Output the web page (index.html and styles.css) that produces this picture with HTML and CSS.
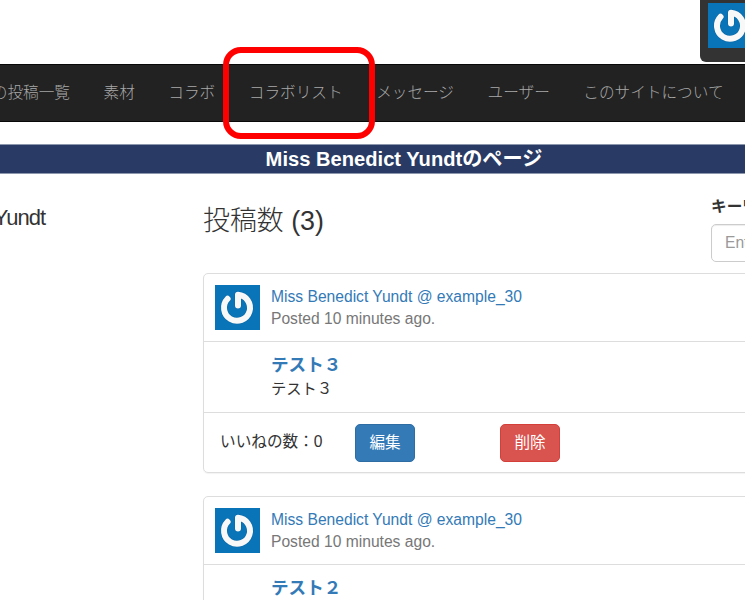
FILE: index.html
```html
<!DOCTYPE html>
<html lang="ja">
<head>
<meta charset="utf-8">
<title>Miss Benedict Yundtのページ</title>
<link rel="stylesheet" href="styles.css">
</head>
<body>
<svg width="0" height="0" class="defs">
  <defs>
    <symbol id="power" viewBox="0 0 45 45">
      <rect width="45" height="45" fill="#0a74b8"/>
      <g fill="none" stroke-linecap="round" stroke-linejoin="round">
        <path d="M12.6 13.8A13 13 0 1 0 23 9.8V20.5" stroke="#07548a" stroke-opacity=".35" stroke-width="7"/>
        <path d="M12.6 13.8A13 13 0 1 0 23 9.8V20.5" stroke="#f8f8f8" stroke-width="6"/>
      </g>
    </symbol>
  </defs>
</svg>
<header class="top"><div class="account"><svg class="avatar"><use href="#power"/></svg></div></header>
<nav class="nav">
  <a>の投稿一覧</a><a>素材</a><a>コラボ</a><a class="marked">コラボリスト</a><a>メッセージ</a><a>ユーザー</a><a>このサイトについて</a>
</nav>
<h1 class="banner">Miss Benedict Yundtのページ</h1>
<div class="columns">
  <aside class="profile"><span>Yundt</span></aside>
  <main>
    <div class="heading">
      <h2>投稿数 (3)</h2>
      <form class="search"><label>キーワード</label><div class="field">Enter</div></form>
    </div>
    <article class="card">
      <div class="author"><svg class="avatar"><use href="#power"/></svg><div><a class="name">Miss Benedict Yundt @ example_30</a><p class="time">Posted 10 minutes ago.</p></div></div>
      <div class="post"><h3>テスト３</h3><p>テスト３</p></div>
      <div class="actions"><span class="likes">いいねの数：0</span><a class="btn edit">編集</a><a class="btn delete">削除</a></div>
    </article>
    <article class="card">
      <div class="author"><svg class="avatar"><use href="#power"/></svg><div><a class="name">Miss Benedict Yundt @ example_30</a><p class="time">Posted 10 minutes ago.</p></div></div>
      <div class="post"><h3>テスト２</h3></div>
    </article>
  </main>
</div>
</body>
</html>
```
FILE: styles.css
```css
* { box-sizing: border-box; }
body { margin: 0; width: 745px; height: 600px; overflow: hidden; background: #fff; color: #333; font: 15.63px/22px "Liberation Sans", "Noto Sans CJK JP", sans-serif; }
h1, h2, h3, p { margin: 0; }
.defs { display: block; }
.avatar { display: block; flex: none; width: 45px; height: 45px; }
.top { height: 64px; display: flex; justify-content: flex-end; align-items: flex-start; }
.account { width: 45px; height: 62px; padding: 3px 0 0 8px; overflow: hidden; background: #333; border-radius: 0 0 0 6px; }
.nav { display: flex; height: 58px; margin-left: -25px; background: #222; border: solid #080808; border-width: 1px 0; color: #a8a8a8; font-weight: 300; white-space: nowrap; }
.nav a { flex: none; padding: 17px 16.8px; }
.marked { position: relative; }
.marked::after { content: ""; box-sizing: border-box; position: absolute; z-index: 2; left: -9px; top: -18px; width: 152px; height: 92px; border: 6px solid #f00; border-radius: 18px; }
.banner { height: 30px; margin-top: 22px; padding-left: 63px; background: #293b64; border: solid #8c96ac; border-width: 1px 0; color: #fff; font-size: 20.15px; line-height: 29px; text-align: center; }
.columns { display: grid; grid-template-columns: 203px 1fr; }
.profile { display: flex; justify-content: flex-end; padding: 33px 158px 0 0; font-size: 22px; letter-spacing: -1px; }
main { min-width: 0; }
.heading { display: flex; justify-content: space-between; height: 99px; }
h2 { padding-top: 29px; font-size: 26.9px; line-height: 36px; font-weight: 300; }
.search { width: 34px; padding-top: 22px; overflow: hidden; white-space: nowrap; }
.search label { display: block; font-weight: 700; }
.field { width: 200px; height: 38px; margin-top: 6px; padding: 7px 13px; border: 1px solid #ccc; border-radius: 5px; color: #999; box-shadow: inset 0 1px 1px rgba(0,0,0,.075); }
.card { width: 700px; height: 200px; margin-bottom: 23px; border: 1px solid #ddd; border-radius: 5px; box-shadow: 0 1px 1px rgba(0,0,0,.05); }
.author { display: flex; gap: 11px; height: 67px; padding: 11px; }
.author > div { padding-top: 1px; }
.name { color: #337ab7; }
.time { color: #777; }
.post { height: 72px; padding: 11px 0 0 67px; border: solid #ddd; border-width: 1px 0; }
h3 { color: #337ab7; font-size: 17.6px; line-height: 24px; }
.post p { font-size: 15.3px; line-height: 23px; }
.actions { display: flex; align-items: flex-start; padding: 11px 16px; }
.likes { width: 135px; padding-top: 7px; white-space: nowrap; }
.btn { width: 60px; height: 38px; border: 1px solid #2e6da4; border-radius: 5px; background: #337ab7; color: #fff; line-height: 35px; text-align: center; }
.delete { margin-left: 85px; border-color: #d43f3a; background: #d9534f; }
```
